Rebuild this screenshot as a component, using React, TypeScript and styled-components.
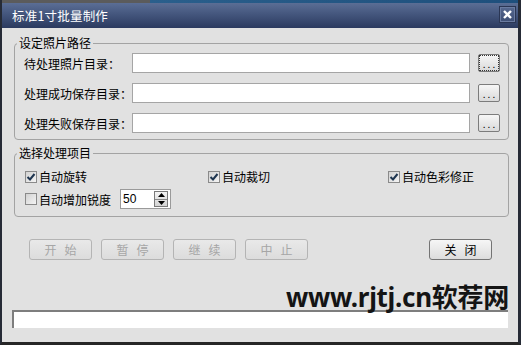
import React from "react";
import styled, { createGlobalStyle, css } from "styled-components";

const GlobalStyle = createGlobalStyle`
  html, body { margin: 0; padding: 0; background: #1d4f7a; }
  body { font-family: "Noto Sans CJK SC", "Noto Sans", sans-serif; font-size: 12px; }
  * { box-sizing: border-box; }
`;

const Window = styled.div`
  position: relative;
  width: 521px;
  height: 345px;
  display: flex;
  flex-direction: column;
  background: #e1e1e1;
  border-left: 2px solid #262b36;
  border-right: 3px solid #262b36;
  border-bottom: 3px solid #262626;
  overflow: hidden;
`;

const TopStrip = styled.div`
  height: 3px;
  flex: none;
  margin: 0 -3px 0 -2px;
  background: linear-gradient(to right, #5b5b5b 0, #5b5b5b 150px, #2a5f8c 150px, #1e4f7c 100%);
`;

const TitleBar = styled.div`
  height: 25px;
  flex: none;
  display: flex;
  align-items: center;
  justify-content: space-between;
  padding: 0 2px 0 10px;
  background: linear-gradient(to bottom, #5b6e95 0%, #44567d 45%, #2b3a5f 100%);
`;

const Title = styled.span`
  color: #ffffff;
  font-size: 12.5px;
  line-height: 14px;
  letter-spacing: 0.2px;
`;

const CloseButton = styled.div`
  width: 17px;
  height: 17px;
  margin-top: -2px;
  display: flex;
  align-items: center;
  justify-content: center;
  background: linear-gradient(to bottom, #56688f, #3d4e74);
  border: 1px solid #2a3654;
  box-shadow: inset 0 0 0 1px #6a7ba0;
`;

const Body = styled.div`
  flex: 1;
  display: flex;
  flex-direction: column;
  padding: 0 9px 0 12px;
`;

const Group = styled.fieldset<{ $mt: number }>`
  margin: ${(p) => p.$mt}px 0 0 0;
  padding: 0;
  border: 1px solid #a3a3a3;
  border-radius: 4px;
  min-width: 0;
`;

const Legend = styled.legend`
  margin-left: 2px;
  padding: 0 2px;
  font-size: 12px;
  line-height: 14px;
  color: #000;
`;

const PathRows = styled.div`
  display: flex;
  flex-direction: column;
  gap: 10px;
  padding: 3px 8px 6px 9px;
`;

const PathRow = styled.div`
  display: flex;
  align-items: center;
  height: 20px;
`;

const Label = styled.span`
  width: 108px;
  flex: none;
  font-size: 12px;
  color: #000;
  white-space: nowrap;
`;

const PathInput = styled.div`
  flex: 1;
  height: 20px;
  background: #fff;
  border: 1px solid #a5a5a5;
`;

const BrowseButton = styled.div<{ $focused?: boolean }>`
  width: 22px;
  height: 18px;
  margin-left: 8px;
  flex: none;
  border: 1px solid #7c7c7c;
  border-radius: 2px;
  background: linear-gradient(to bottom, #f6f6f6, #dadada);
  display: flex;
  align-items: flex-end;
  justify-content: center;
  padding-bottom: 4px;
  font-size: 10px;
  line-height: 6px;
  letter-spacing: 2px;
  padding-left: 2px;
  color: #000;
  ${(p) =>
    p.$focused &&
    css`
      outline: 1px dotted #333;
      outline-offset: -2px;
    `}
`;

const Options = styled.div`
  display: flex;
  flex-direction: column;
  gap: 5px;
  padding: 8px 8px 7px 10px;
`;

const OptionGrid = styled.div`
  display: grid;
  grid-template-columns: 183px 180px auto;
  height: 16px;
  align-items: center;
`;

const OptionRow = styled.div`
  display: flex;
  align-items: center;
  height: 20px;
`;

const CheckItem = styled.label`
  display: flex;
  align-items: center;
  gap: 2px;
  font-size: 12px;
  color: #000;
  white-space: nowrap;
`;

const Box = styled.span`
  width: 12px;
  height: 12px;
  flex: none;
  border: 1px solid #8a8a8a;
  background: linear-gradient(135deg, #d2d2d2, #f4f4f4);
  display: flex;
  align-items: center;
  justify-content: center;
`;

const Spin = styled.div`
  margin-left: 9px;
  width: 51px;
  height: 20px;
  background: #fff;
  border: 1px solid #9a9a9a;
  display: flex;
  align-items: center;
  padding-left: 2px;
  font-family: "Liberation Sans", Arial, sans-serif;
  font-size: 12px;
`;

const SpinValue = styled.span`
  flex: 1;
`;

const SpinArrows = styled.div`
  width: 14px;
  height: 16px;
  margin-right: 2px;
  display: flex;
  flex-direction: column;
  border: 1px solid #7a7a7a;
  background: linear-gradient(to bottom, #f4f4f4, #d4d4d4);
`;

const SpinHalf = styled.div<{ $top?: boolean }>`
  flex: 1;
  display: flex;
  align-items: center;
  justify-content: center;
  ${(p) => p.$top && css`border-bottom: 1px solid #8a8a8a;`}
`;

const ActionBar = styled.div`
  margin-top: 22px;
  display: flex;
  align-items: center;
  justify-content: space-between;
  padding: 0 17px 0 15px;
`;

const ButtonGroup = styled.div`
  display: flex;
  gap: 9px;
`;

const ActionButton = styled.div<{ $disabled?: boolean }>`
  width: 63px;
  height: 21px;
  border-radius: 3px;
  display: flex;
  align-items: center;
  justify-content: center;
  font-size: 12px;
  letter-spacing: 8px;
  padding-left: 8px;
  ${(p) =>
    p.$disabled
      ? css`
          border: 1px solid #b4b4b4;
          background: linear-gradient(to bottom, #e9e9e9, #dcdcdc);
          color: #a6a6a6;
        `
      : css`
          border: 1px solid #747474;
          background: linear-gradient(to bottom, #f6f6f6, #dcdcdc);
          color: #000;
        `}
`;

const StatusField = styled.div`
  margin: 50px 1px 0 -2px;
  height: 18px;
  background: #fff;
  border-top: 2px solid #7e7e7e;
  border-left: 2px solid #7e7e7e;
`;

const Watermark = styled.div`
  position: absolute;
  left: 284px;
  top: 282px;
  font-family: "Noto Sans", "Noto Sans CJK SC", sans-serif;
  font-weight: 700;
  font-size: 26px;
  line-height: 30px;
  color: #141414;
  white-space: nowrap;
  letter-spacing: -0.3px;
`;

const Check = () => (
  <svg width="10" height="10" viewBox="0 0 10 10">
    <path d="M1.5 5 L4 7.5 L8.5 2" fill="none" stroke="#1e3550" strokeWidth="2" />
  </svg>
);

const Checkbox: React.FC<{ checked?: boolean; label: string }> = ({ checked, label }) => (
  <CheckItem>
    <Box>{checked && <Check />}</Box>
    {label}
  </CheckItem>
);

export default function App() {
  return (
    <>
      <GlobalStyle />
      <Window>
        <TopStrip />
        <TitleBar>
          <Title>标准1寸批量制作</Title>
          <CloseButton>
            <svg width="11" height="11" viewBox="0 0 11 11">
              <path d="M2 2 L9 9 M9 2 L2 9" stroke="#fff" strokeWidth="2.4" />
            </svg>
          </CloseButton>
        </TitleBar>
        <Body>
          <Group $mt={8}>
            <Legend>设定照片路径</Legend>
            <PathRows>
              <PathRow>
                <Label>待处理照片目录：</Label>
                <PathInput />
                <BrowseButton $focused>...</BrowseButton>
              </PathRow>
              <PathRow>
                <Label>处理成功保存目录：</Label>
                <PathInput />
                <BrowseButton>...</BrowseButton>
              </PathRow>
              <PathRow>
                <Label>处理失败保存目录：</Label>
                <PathInput />
                <BrowseButton>...</BrowseButton>
              </PathRow>
            </PathRows>
          </Group>
          <Group $mt={6}>
            <Legend>选择处理项目</Legend>
            <Options>
              <OptionGrid>
                <Checkbox checked label="自动旋转" />
                <Checkbox checked label="自动裁切" />
                <Checkbox checked label="自动色彩修正" />
              </OptionGrid>
              <OptionRow>
                <Checkbox label="自动增加锐度" />
                <Spin>
                  <SpinValue>50</SpinValue>
                  <SpinArrows>
                    <SpinHalf $top>
                      <svg width="7" height="4" viewBox="0 0 7 4">
                        <path d="M0 4 L3.5 0 L7 4 Z" fill="#000" />
                      </svg>
                    </SpinHalf>
                    <SpinHalf>
                      <svg width="7" height="4" viewBox="0 0 7 4">
                        <path d="M0 0 L3.5 4 L7 0 Z" fill="#000" />
                      </svg>
                    </SpinHalf>
                  </SpinArrows>
                </Spin>
              </OptionRow>
            </Options>
          </Group>
          <ActionBar>
            <ButtonGroup>
              <ActionButton $disabled>开始</ActionButton>
              <ActionButton $disabled>暂停</ActionButton>
              <ActionButton $disabled>继续</ActionButton>
              <ActionButton $disabled>中止</ActionButton>
            </ButtonGroup>
            <ActionButton>关闭</ActionButton>
          </ActionBar>
          <StatusField />
        </Body>
        <Watermark>www.rjtj.cn软荐网</Watermark>
      </Window>
    </>
  );
}
